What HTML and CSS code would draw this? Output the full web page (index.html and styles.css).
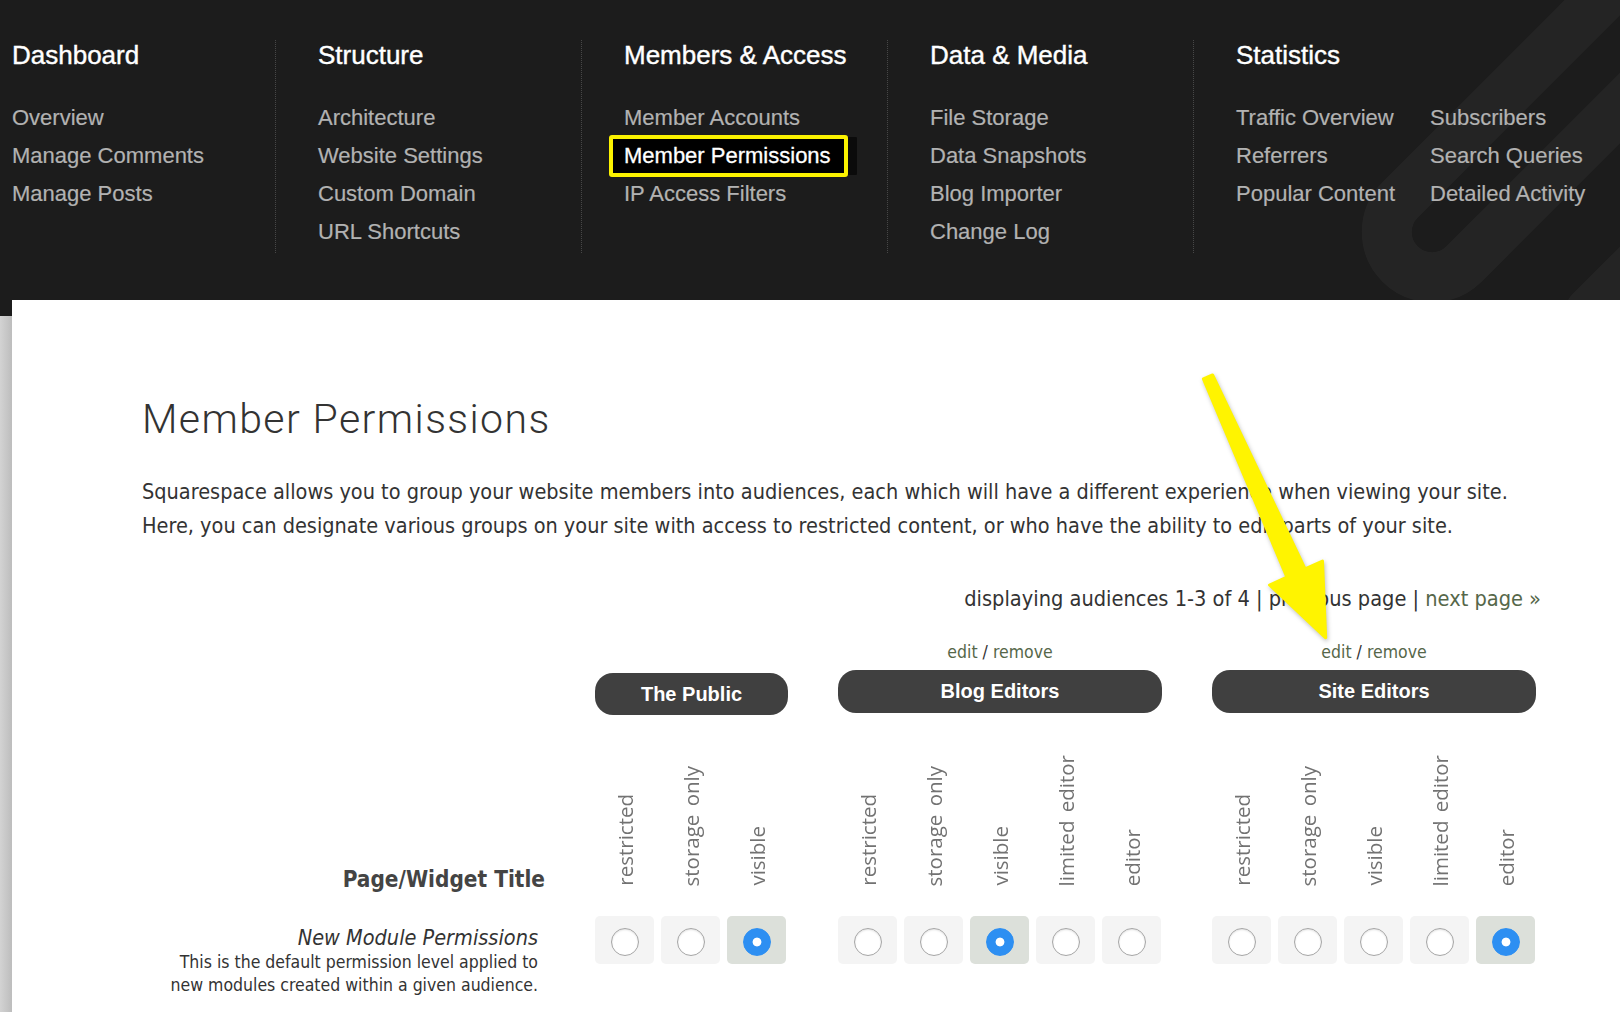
FILE: index.html
```html
<!DOCTYPE html>
<html lang="en">
<head>
<meta charset="utf-8">
<title>Member Permissions</title>
<link rel="stylesheet" href="styles.css">
</head>
<body>
<header class="topnav">
  <svg class="bg-logo" width="1620" height="300" viewBox="0 0 1620 300" aria-hidden="true">
    <path d="M 1720 -120 L 1400 200 A 45 45 0 0 0 1464 264 L 1784 -56" fill="none" stroke="rgba(255,255,255,0.04)" stroke-width="50" stroke-linecap="round"/>
    <path d="M 1590 312 L 1720 182" fill="none" stroke="rgba(255,255,255,0.04)" stroke-width="50" stroke-linecap="round"/>
  </svg>
  <nav class="menu">
    <section class="menu-col">
      <h2>Dashboard</h2>
      <ul>
        <li>Overview</li>
        <li>Manage Comments</li>
        <li>Manage Posts</li>
      </ul>
    </section>
    <section class="menu-col">
      <h2>Structure</h2>
      <ul>
        <li>Architecture</li>
        <li>Website Settings</li>
        <li>Custom Domain</li>
        <li>URL Shortcuts</li>
      </ul>
    </section>
    <section class="menu-col">
      <h2>Members &amp; Access</h2>
      <ul>
        <li>Member Accounts</li>
        <li><span class="current">Member Permissions</span></li>
        <li>IP Access Filters</li>
      </ul>
    </section>
    <section class="menu-col">
      <h2>Data &amp; Media</h2>
      <ul>
        <li>File Storage</li>
        <li>Data Snapshots</li>
        <li>Blog Importer</li>
        <li>Change Log</li>
      </ul>
    </section>
    <section class="menu-col stats">
      <h2>Statistics</h2>
      <div class="stat-lists">
        <ul>
          <li>Traffic Overview</li>
          <li>Referrers</li>
          <li>Popular Content</li>
        </ul>
        <ul>
          <li>Subscribers</li>
          <li>Search Queries</li>
          <li>Detailed Activity</li>
        </ul>
      </div>
    </section>
  </nav>
</header>

<div class="page">
  <div class="edge"></div>
  <main class="panel">
    <h1>Member Permissions</h1>
    <p class="intro">Squarespace allows you to group your website members into audiences, each which will have a different experience when viewing your site.<br>Here, you can designate various groups on your site with access to restricted content, or who have the ability to edit parts of your site.</p>
    <div class="pager">displaying audiences 1-3 of 4 | previous page | <a class="lnk">next page »</a></div>

    <div class="perm-grid">
      <div class="edit g2"><a class="lnk">edit</a> / <a class="lnk">remove</a></div>
      <div class="edit g3"><a class="lnk">edit</a> / <a class="lnk">remove</a></div>

      <div class="pill g1 public">The Public</div>
      <div class="pill g2">Blog Editors</div>
      <div class="pill g3">Site Editors</div>

      <div class="pw-title">Page/Widget Title</div>

      <div class="heads g1">
        <div class="hd"><span>restricted</span></div>
        <div class="hd"><span>storage only</span></div>
        <div class="hd"><span>visible</span></div>
      </div>
      <div class="heads g2">
        <div class="hd"><span>restricted</span></div>
        <div class="hd"><span>storage only</span></div>
        <div class="hd"><span>visible</span></div>
        <div class="hd"><span>limited editor</span></div>
        <div class="hd"><span>editor</span></div>
      </div>
      <div class="heads g3">
        <div class="hd"><span>restricted</span></div>
        <div class="hd"><span>storage only</span></div>
        <div class="hd"><span>visible</span></div>
        <div class="hd"><span>limited editor</span></div>
        <div class="hd"><span>editor</span></div>
      </div>

      <div class="module">
        <div class="module-name">New Module Permissions</div>
        <div class="module-desc">This is the default permission level applied to<br>new modules created within a given audience.</div>
      </div>

      <div class="cells g1">
        <div class="cell"><span class="radio"></span></div>
        <div class="cell"><span class="radio"></span></div>
        <div class="cell on"><span class="radio on"></span></div>
      </div>
      <div class="cells g2">
        <div class="cell"><span class="radio"></span></div>
        <div class="cell"><span class="radio"></span></div>
        <div class="cell on"><span class="radio on"></span></div>
        <div class="cell"><span class="radio"></span></div>
        <div class="cell"><span class="radio"></span></div>
      </div>
      <div class="cells g3">
        <div class="cell"><span class="radio"></span></div>
        <div class="cell"><span class="radio"></span></div>
        <div class="cell"><span class="radio"></span></div>
        <div class="cell"><span class="radio"></span></div>
        <div class="cell on"><span class="radio on"></span></div>
      </div>
    </div>
  </main>
</div>

<svg class="arrow" width="1620" height="1012" viewBox="0 0 1620 1012" aria-hidden="true">
  <polygon points="1203.4,379 1212.6,375 1305.1,568.9 1322.5,561 1325.7,637.8 1269.5,585 1286.9,577.1" fill="#fff400" stroke="#fff400" stroke-width="3" stroke-linejoin="round"/>
</svg>
</body>
</html>
```

FILE: styles.css
```css
html, body {
  margin: 0;
  padding: 0;
}

body {
  position: relative;
  width: 1620px;
  height: 1012px;
  overflow: hidden;
  background: #1c1c1c;
  font-family: "Liberation Sans", Arial, sans-serif;
}

/* ---------- top navigation ---------- */
.topnav {
  position: relative;
  height: 300px;
  background: #1c1c1c;
  overflow: hidden;
}

.bg-logo {
  position: absolute;
  left: 0;
  top: 0;
}

.menu {
  position: relative;
  display: flex;
  padding: 40px 0 0 12px;
}

.menu-col {
  width: 263px;
  padding-bottom: 2px;
}

.menu-col + .menu-col {
  border-left: 1px dotted #474747;
  padding-left: 42px;
}

.menu-col.stats {
  width: 380px;
}

.menu-col h2 {
  margin: 0;
  font-size: 26px;
  line-height: 30px;
  font-weight: normal;
  color: #ffffff;
  -webkit-text-stroke: 0.4px #ffffff;
}

.menu-col ul {
  list-style: none;
  margin: 29px 0 0;
  padding: 0;
}

.menu-col li {
  font-size: 22px;
  line-height: 38px;
  color: #b2b2b2;
  white-space: nowrap;
  -webkit-text-stroke: 0.2px #b2b2b2;
}

.stat-lists {
  display: flex;
}

.stat-lists ul:first-child {
  width: 194px;
}

.current {
  display: inline-block;
  vertical-align: top;
  box-sizing: border-box;
  width: 239px;
  margin: -2px 0 -2px -15px;
  padding-left: 11px;
  line-height: 34px;
  border: 4px solid #fbf200;
  border-radius: 3px;
  background: #000;
  color: #fff;
  -webkit-text-stroke: 0.3px #ffffff;
  box-shadow: 11px 0 0 -2px #0b0b0b;
}

/* ---------- page ---------- */
.page {
  display: flex;
  height: 712px;
}

.edge {
  width: 12px;
  margin-top: 16px;
  background: linear-gradient(to right, #d3d3d3, #bdbdbd);
}

.panel {
  flex: 1;
  background: #ffffff;
  padding: 95px 79px 0 130px;
  color: #333;
  font-family: "DejaVu Sans Condensed", "DejaVu Sans", sans-serif;
  font-stretch: condensed;
}

.panel h1 {
  margin: 0;
  font-family: Roboto, "Liberation Sans", sans-serif;
  font-stretch: normal;
  font-weight: 300;
  font-size: 41px;
  letter-spacing: 1.4px;
  line-height: 48px;
  color: #333;
}

.intro {
  margin: 32px 0 0;
  font-size: 21.5px;
  line-height: 34px;
}

.pager {
  margin-top: 39px;
  text-align: right;
  font-size: 21.6px;
  line-height: 34px;
}

.lnk {
  color: #56674a;
  text-decoration: none;
}

/* ---------- permissions grid ---------- */
.perm-grid {
  margin-top: 25px;
  display: grid;
  grid-template-columns: 403px 193px 324px 324px;
  grid-template-rows: 29px 43px 203px auto;
  column-gap: 50px;
}

.g1 { grid-column: 2; }
.g2 { grid-column: 3; }
.g3 { grid-column: 4; }

.edit {
  grid-row: 1;
  text-align: center;
  font-size: 17.5px;
  line-height: 22px;
}

.pill {
  grid-row: 2;
  height: 43px;
  border-radius: 18px;
  background: #404040;
  color: #fff;
  text-align: center;
  font-family: "Liberation Sans", Arial, sans-serif;
  font-stretch: normal;
  font-weight: bold;
  font-size: 20px;
  line-height: 43px;
}

.pill.public {
  margin-top: 3px;
  height: 42px;
  line-height: 42px;
}

.pw-title {
  grid-column: 1;
  grid-row: 3;
  align-self: end;
  margin-bottom: 24px;
  text-align: right;
  font-weight: bold;
  font-size: 22.4px;
  line-height: 26px;
  color: #444;
}

.heads {
  grid-row: 3;
  display: flex;
  gap: 7px;
  align-items: flex-end;
  padding-bottom: 30px;
}

.hd {
  width: 59px;
  display: flex;
  justify-content: center;
  align-items: flex-end;
}

.hd span {
  writing-mode: vertical-rl;
  transform: rotate(180deg);
  white-space: nowrap;
  font-family: "Open Sans", sans-serif;
  font-stretch: normal;
  font-size: 20.5px;
  line-height: 24px;
  word-spacing: 3px;
  color: #727272;
}

.module {
  grid-column: 1;
  grid-row: 4;
  text-align: right;
  padding: 9px 7px 0 0;
}

.module-name {
  font-style: italic;
  font-size: 21.5px;
  line-height: 26px;
}

.module-desc {
  font-size: 17.5px;
  line-height: 23px;
}

.cells {
  grid-row: 4;
  align-self: start;
  display: flex;
  gap: 7px;
}

.cell {
  width: 59px;
  height: 48px;
  border-radius: 5px;
  background: #f4f4f4;
  display: flex;
  align-items: center;
  justify-content: center;
}

.cell.on {
  background: #dce0da;
}

.radio {
  width: 28px;
  height: 28px;
  margin-top: 3px;
  box-sizing: border-box;
  border-radius: 50%;
  border: 1px solid #a6a6a6;
  background: #fff;
  box-shadow: inset 0 1px 2px rgba(0, 0, 0, 0.12);
}

.radio.on {
  border-color: #2d8ff2;
  background: radial-gradient(circle, #ffffff 0 4px, #2d8ff2 4.8px);
  box-shadow: none;
}

/* ---------- annotation arrow ---------- */
.arrow {
  position: absolute;
  left: 0;
  top: 0;
  pointer-events: none;
  filter: drop-shadow(1px 2px 2px rgba(0, 0, 0, 0.25));
}
```
